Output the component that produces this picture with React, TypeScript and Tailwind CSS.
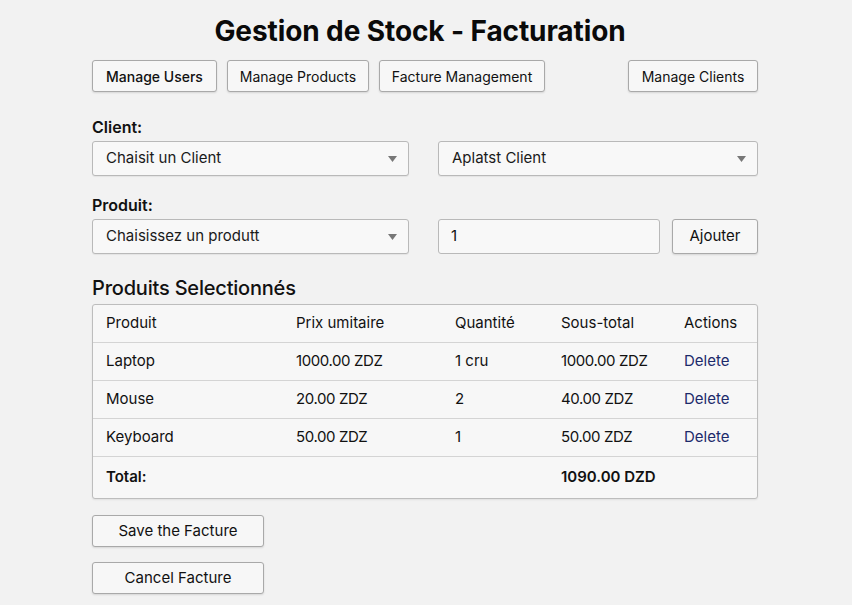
import React from 'react';

const navButtons = ['Manage Users', 'Manage Products', 'Facture Management'];

const rows = [
  { produit: 'Laptop', prix: '1000.00 ZDZ', qte: '1 cru', total: '1000.00 ZDZ' },
  { produit: 'Mouse', prix: '20.00 ZDZ', qte: '2', total: '40.00 ZDZ' },
  { produit: 'Keyboard', prix: '50.00 ZDZ', qte: '1', total: '50.00 ZDZ' },
];

const Caret = () => (
  <svg width="9" height="6" viewBox="0 0 9 6" className="shrink-0">
    <path d="M0 0h9L4.5 6z" fill="#777" />
  </svg>
);

const Select = ({ label }: { label: string }) => (
  <div className="flex h-[35px] items-center justify-between rounded-[3px] border border-[#b9b9b9] bg-[#f8f8f8] pl-[13px] pr-[11px] text-[15px] text-[#1a1a1a] shadow-[0_1px_1px_rgba(0,0,0,0.06)]">
    <span>{label}</span>
    <Caret />
  </div>
);

const Btn = ({ children, className = '' }: { children: React.ReactNode; className?: string }) => (
  <button
    className={`flex h-[32px] items-center justify-center rounded-[3px] border border-[#a9a9a9] bg-[#f7f7f7] text-[14px] text-[#111] shadow-[0_1px_2px_rgba(0,0,0,0.12)] ${className}`}
  >
    {children}
  </button>
);

const cols = 'grid grid-cols-[190px_159px_106px_123px_1fr] items-center pl-[13px]';

export default function App() {
  return (
    <div className="min-h-[605px] w-full bg-[#f2f2f2] font-['Inter','Liberation_Sans',sans-serif] text-[#111]">
      <div className="ml-[92px] w-[666px] pt-[12px]">
        <h1 className="pr-[10px] text-center text-[28px] leading-[38px] font-bold tracking-[-0.1px] text-[#0a0a0a]">
          Gestion de Stock - Facturation
        </h1>

        <div className="mt-[10px] flex gap-[10px]">
          <Btn className="w-[125px] font-medium">Manage Users</Btn>
          <Btn className="w-[142px]">{navButtons[1]}</Btn>
          <Btn className="w-[166px]">{navButtons[2]}</Btn>
          <Btn className="ml-auto w-[130px]">Manage Clients</Btn>
        </div>

        <div className="mt-[24px] text-[16px] leading-[22px] font-semibold">Client:</div>
        <div className="mt-[3px] grid grid-cols-[317px_1fr] gap-[29px]">
          <Select label="Chaisit un Client" />
          <Select label="Aplatst Client" />
        </div>

        <div className="mt-[18px] text-[16px] leading-[22px] font-semibold">Produit:</div>
        <div className="mt-[3px] flex gap-[12px]">
          <div className="w-[317px]">
            <Select label="Chaisissez un produtt" />
          </div>
          <div className="ml-[17px] flex h-[35px] w-[222px] items-center rounded-[3px] border border-[#b9b9b9] bg-[#f8f8f8] pl-[12px] text-[15px]">
            1
          </div>
          <Btn className="h-[35px] flex-1 text-[15px]">Ajouter</Btn>
        </div>

        <h2 className="mt-[20px] text-[20px] leading-[28px] font-medium tracking-[-0.2px]">
          Produits Selectionnés
        </h2>

        <div className="mt-[2px] overflow-hidden rounded-[3px] border border-[#bdbdbd] bg-[#f7f7f7] text-[15px] shadow-[0_1px_2px_rgba(0,0,0,0.08)]">
          <div className={`${cols} h-[38px] border-b border-[#d4d4d4]`}>
            <span>Produit</span>
            <span>Prix umitaire</span>
            <span>Quantité</span>
            <span>Sous-total</span>
            <span>Actions</span>
          </div>
          {rows.map((r) => (
            <div key={r.produit} className={`${cols} h-[38px] border-b border-[#d4d4d4]`}>
              <span>{r.produit}</span>
              <span className="tracking-[-0.4px]">{r.prix}</span>
              <span>{r.qte}</span>
              <span className="tracking-[-0.4px]">{r.total}</span>
              <span className="text-[#1c2a6b]">Delete</span>
            </div>
          ))}
          <div className={`${cols} h-[41px] font-semibold`}>
            <span>Total:</span>
            <span />
            <span />
            <span>1090.00 DZD</span>
            <span />
          </div>
        </div>

        <div className="mt-[16px] flex flex-col gap-[15px]">
          <Btn className="w-[172px] text-[15px]">Save the Facture</Btn>
          <Btn className="w-[172px] text-[15px]">Cancel Facture</Btn>
        </div>
      </div>
    </div>
  );
}
